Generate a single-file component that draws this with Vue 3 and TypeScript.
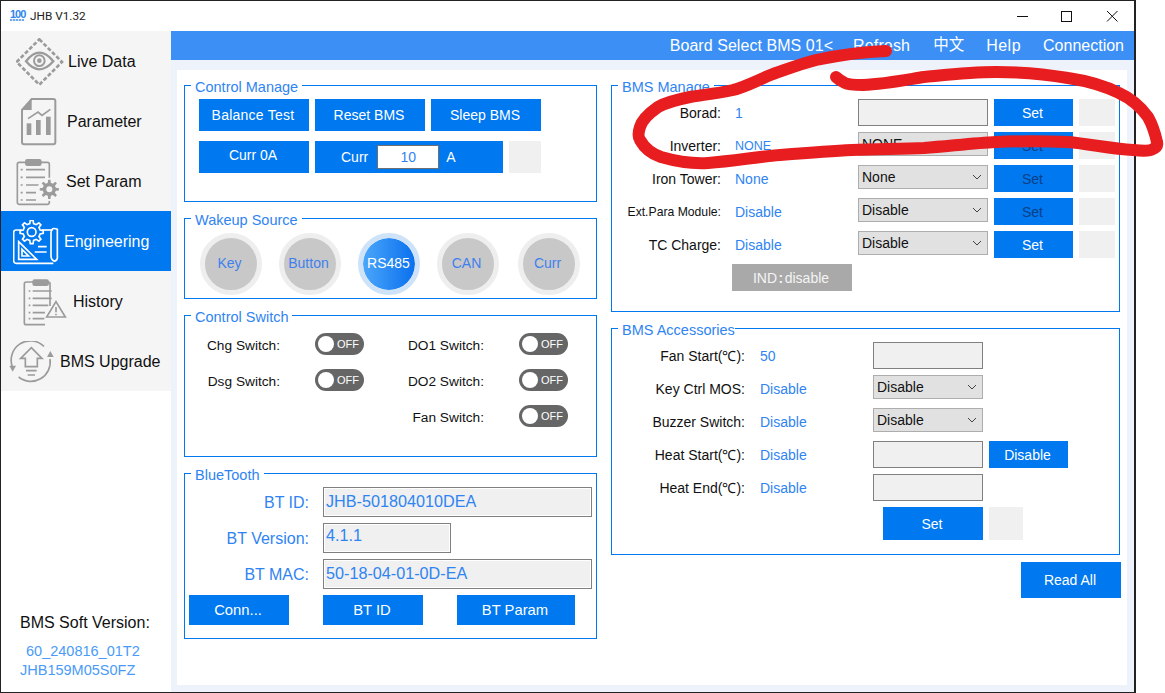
<script setup lang="ts">
function gear(cx: number, cy: number, r1: number, r2: number, n: number): string {
  const pts: string[] = []
  const step = (Math.PI * 2) / n
  for (let i = 0; i < n; i++) {
    const a = i * step - Math.PI / 2
    const w = step * 0.22
    const seq: [number, number][] = [
      [r1, a - w * 1.3],
      [r2, a - w * 0.7],
      [r2, a + w * 0.7],
      [r1, a + w * 1.3],
    ]
    for (const [r, t] of seq) {
      pts.push(`${(cx + r * Math.cos(t)).toFixed(1)},${(cy + r * Math.sin(t)).toFixed(1)}`)
    }
  }
  return 'M' + pts.join(' L') + ' Z'
}
const setGear = gear(148, 565, 20, 29, 8)
const engGear = gear(95, 78, 26, 35, 8)

const scribble =
  'M886 51 C860 52 835 56 816 60 C800 64 785 70 773 74 C758 80 745 87 733 90 C715 94 700 95 690 97 C675 100 665 103 658 107 C648 114 642 120 640 127 C638 133 638 137 640 140 C645 149 652 154 661 157 C675 161 692 164 708 163 C735 161 755 157 780 155 C805 153 830 151 852 150 C880 149 905 149 924 148 C950 146 975 143 996 142 C1020 141 1045 141 1068 142 C1090 144 1112 149 1133 150 C1143 151 1150 151 1151 150 C1156 148 1158 146 1157 142 C1155 133 1152 124 1148 117 C1140 106 1130 98 1119 93 C1105 86 1088 81 1068 78 C1045 74 1020 72 996 72 C970 72 945 75 924 77 C905 80 885 84 863 85 C855 85 849 85 845 83 C841 81 838 79 836 77'
</script>

<template>
  <div class="window">
    <header class="titlebar">
      <div class="logo"><b>100</b><i></i></div>
      <span class="title">JHB V1.32</span>
      <div class="caption">
        <svg width="46" height="28" viewBox="0 0 46 28"><path d="M20 14.5h11" stroke="#111" fill="none" /></svg>
        <svg width="46" height="28" viewBox="0 0 46 28"><rect x="18.5" y="9.5" width="10" height="10" stroke="#111" fill="none" /></svg>
        <svg width="46" height="28" viewBox="0 0 46 28"><path d="M18 9l10.500 10.500M28.500 9L18 19.500" stroke="#111" fill="none" /></svg>
      </div>
    </header>

    <div class="body">
      <aside class="sidebar">
        <nav class="menu">
          <div class="item i-live">
            <svg class="icon" width="48" height="48" viewBox="48 114 144 144">
              <path d="M118 118L186 186L118 254L50 186Z" fill="none" stroke="#9b9b9b" stroke-width="8" stroke-dasharray="12 6" />
              <path d="M78 184Q118 132 160 184Q118 232 78 184Z" fill="none" stroke="#9b9b9b" stroke-width="7" />
              <circle cx="118" cy="182" r="16" fill="none" stroke="#9b9b9b" stroke-width="6" />
              <circle cx="118" cy="182" r="7" fill="#9b9b9b" />
            </svg>
            <span>Live Data</span>
          </div>
          <div class="item i-param">
            <svg class="icon" width="36" height="48" viewBox="63 294 108 144">
              <path d="M95 297H160a6 6 0 0 1 6 6V427a6 6 0 0 1-6 6H72a6 6 0 0 1-6-6V330Z" fill="none" stroke="#9b9b9b" stroke-width="6" />
              <path d="M95 297L66 330H95Z" fill="#9b9b9b" />
              <rect x="80" y="370" width="14" height="35" fill="#9b9b9b" />
              <rect x="108" y="360" width="14" height="45" fill="#9b9b9b" />
              <rect x="138" y="350" width="14" height="55" fill="#9b9b9b" />
              <path d="M84 356L114 336L126 346L151 328" fill="none" stroke="#9b9b9b" stroke-width="5" />
            </svg>
            <span>Parameter</span>
          </div>
          <div class="item i-set">
            <svg class="icon" width="44" height="47" viewBox="48 474 132 141">
              <rect x="52" y="484" width="96" height="126" rx="6" fill="none" stroke="#9b9b9b" stroke-width="5" />
              <rect x="75" y="474" width="50" height="21" rx="7" fill="#9b9b9b" />
              <path d="M78 506H135M78 529H135M78 552H118M78 575H108M78 597H108" stroke="#9b9b9b" stroke-width="5" fill="none" />
              <path d="M62 506h6M62 529h6M62 552h6M62 575h6M62 597h6" stroke="#9b9b9b" stroke-width="5" fill="none" />
              <circle cx="148" cy="565" r="35" fill="#f5f5f5" />
              <path :d="setGear" fill="#9b9b9b" />
              <circle cx="148" cy="565" r="9" fill="#f5f5f5" />
            </svg>
            <span>Set Param</span>
          </div>
          <div class="item i-eng active">
            <svg class="icon" width="46" height="45" viewBox="39 42 138 135">
              <g fill="none" stroke="#fff" stroke-width="5">
                <path d="M65 72H48Q41 72 41 79V164Q41 172 49 172H160" />
                <path d="M125 72H158" />
                <path d="M172 70Q154 62 153 80V150Q153 162 164 166Q174 162 172 150Z" />
                <path :d="engGear" />
                <circle cx="95" cy="78" r="13" />
                <path d="M56 107L110 160H56Z" />
                <path d="M66 130L86 150H66Z" />
                <path d="M114 122H140M104 138H140" />
              </g>
            </svg>
            <span>Engineering</span>
          </div>
          <div class="item i-hist">
            <svg class="icon" width="44" height="47" viewBox="69 219 132 141">
              <path d="M150 300V232Q150 228 145 228H79Q73 228 73 234V350Q73 356 79 356H135" fill="none" stroke="#9b9b9b" stroke-width="5" />
              <rect x="97" y="220" width="50" height="20" rx="7" fill="#9b9b9b" />
              <path d="M98 255H155M98 277H155M98 298H145M98 320H135M98 338H133" stroke="#9b9b9b" stroke-width="5" fill="none" />
              <path d="M86 255h5M86 277h5M86 298h5M86 320h5M86 338h5" stroke="#9b9b9b" stroke-width="5" fill="none" />
              <path d="M168 287L196 333H140Z" fill="#f5f5f5" stroke="#9b9b9b" stroke-width="5" />
              <path d="M168 303V319M168 323V328" stroke="#9b9b9b" stroke-width="5" fill="none" />
            </svg>
            <span>History</span>
          </div>
          <div class="item i-upg">
            <svg class="icon" width="46" height="42" viewBox="27 408 138 126">
              <g fill="none" stroke="#9b9b9b" stroke-width="5">
                <path d="M38 488A58 58 0 0 1 132 424" />
                <path d="M150 462A58 58 0 0 1 56 516" />
                <path d="M94 428L126 460H112V485H76V460H62Z" />
                <path d="M78 497H110M83 510H105" />
              </g>
              <path d="M28 482H48L38 500Z" fill="#9b9b9b" />
              <path d="M141 456H161L151 438Z" fill="#9b9b9b" />
            </svg>
            <span>BMS Upgrade</span>
          </div>
        </nav>
        <div class="version">
          <p class="version-title">BMS Soft Version:</p>
          <p class="version-a">60_240816_01T2</p>
          <p class="version-b">JHB159M05S0FZ</p>
        </div>
      </aside>

      <main class="main">
        <div class="topbar">
          <span class="t-board">Board Select BMS 01&lt;</span>
          <span class="t-refresh">Refresh</span>
          <span class="t-cn">中文</span>
          <span class="t-help">Help</span>
          <span>Connection</span>
        </div>
        <div class="canvas">
          <div class="panel">
            <div class="col left">
              <section class="group g-control">
                <span class="legend">Control Manage</span>
                <div class="btn-row">
                  <button class="btn w110 wide">Balance Test</button>
                  <button class="btn w110">Reset BMS</button>
                  <button class="btn w110">Sleep BMS</button>
                </div>
                <div class="btn-row">
                  <button class="btn w110 raised">Curr 0A</button>
                  <div class="curr">
                    <span>Curr</span>
                    <input class="curr-input" value="10" readonly />
                    <span>A</span>
                  </div>
                  <div class="square s-curr"></div>
                </div>
              </section>

              <section class="group g-wake">
                <span class="legend">Wakeup Source</span>
                <div class="wake"><span>Key</span></div>
                <div class="wake"><span>Button</span></div>
                <div class="wake on"><span>RS485</span></div>
                <div class="wake"><span>CAN</span></div>
                <div class="wake last"><span>Curr</span></div>
              </section>

              <section class="group g-switch">
                <span class="legend">Control Switch</span>
                <span class="lab">Chg Switch:</span>
                <div class="toggle"><i></i><b>OFF</b></div>
                <span class="lab">DO1 Switch:</span>
                <div class="toggle"><i></i><b>OFF</b></div>
                <span class="lab">Dsg Switch:</span>
                <div class="toggle"><i></i><b>OFF</b></div>
                <span class="lab">DO2 Switch:</span>
                <div class="toggle"><i></i><b>OFF</b></div>
                <span class="lab fan">Fan Switch:</span>
                <div class="toggle"><i></i><b>OFF</b></div>
              </section>

              <section class="group g-bt">
                <span class="legend">BlueTooth</span>
                <span class="bt-lab">BT ID:</span>
                <input class="bt-input" value="JHB-501804010DEA" readonly />
                <span class="bt-lab">BT Version:</span>
                <input class="bt-input short" value="4.1.1" readonly />
                <span class="bt-lab">BT MAC:</span>
                <input class="bt-input" value="50-18-04-01-0D-EA" readonly />
                <div class="bt-btns">
                  <button class="btn w100">Conn...</button>
                  <button class="btn w100">BT ID</button>
                  <button class="btn w118">BT Param</button>
                </div>
              </section>
            </div>

            <div class="col right">
              <section class="group g-manage">
                <span class="legend">BMS Manage</span>
                <span class="lab">Borad:</span>
                <span class="val">1</span>
                <input class="field" readonly />
                <button class="btn">Set</button>
                <div class="square"></div>

                <span class="lab">Inverter:</span>
                <span class="val small">NONE</span>
                <div class="select"><span>NONE</span><svg width="10" height="6" viewBox="0 0 10 6"><path d="M1 1l4 4 4-4" fill="none" stroke="#444" /></svg></div>
                <button class="btn dark">Set</button>
                <div class="square"></div>

                <span class="lab">Iron Tower:</span>
                <span class="val">None</span>
                <div class="select"><span>None</span><svg width="10" height="6" viewBox="0 0 10 6"><path d="M1 1l4 4 4-4" fill="none" stroke="#444" /></svg></div>
                <button class="btn dark">Set</button>
                <div class="square"></div>

                <span class="lab tiny">Ext.Para Module:</span>
                <span class="val">Disable</span>
                <div class="select"><span>Disable</span><svg width="10" height="6" viewBox="0 0 10 6"><path d="M1 1l4 4 4-4" fill="none" stroke="#444" /></svg></div>
                <button class="btn dark">Set</button>
                <div class="square"></div>

                <span class="lab">TC Charge:</span>
                <span class="val">Disable</span>
                <div class="select"><span>Disable</span><svg width="10" height="6" viewBox="0 0 10 6"><path d="M1 1l4 4 4-4" fill="none" stroke="#444" /></svg></div>
                <button class="btn">Set</button>
                <div class="square"></div>

                <button class="ind">IND<span class="colon">:</span>disable</button>
              </section>

              <section class="group g-acc">
                <span class="legend tight">BMS Accessories</span>
                <span class="lab">Fan Start(℃):</span>
                <span class="val">50</span>
                <input class="field" readonly />
                <span></span>

                <span class="lab">Key Ctrl MOS:</span>
                <span class="val">Disable</span>
                <div class="select"><span>Disable</span><svg width="10" height="6" viewBox="0 0 10 6"><path d="M1 1l4 4 4-4" fill="none" stroke="#444" /></svg></div>
                <span></span>

                <span class="lab">Buzzer Switch:</span>
                <span class="val">Disable</span>
                <div class="select"><span>Disable</span><svg width="10" height="6" viewBox="0 0 10 6"><path d="M1 1l4 4 4-4" fill="none" stroke="#444" /></svg></div>
                <span></span>

                <span class="lab">Heat Start(℃):</span>
                <span class="val">Disable</span>
                <input class="field" readonly />
                <button class="btn">Disable</button>

                <span class="lab">Heat End(℃):</span>
                <span class="val">Disable</span>
                <input class="field" readonly />
                <span></span>

                <button class="btn acc-set">Set</button>
                <div class="square s-acc"></div>
              </section>

              <button class="btn read-all">Read All</button>
            </div>
          </div>
        </div>
      </main>
    </div>
  </div>

  <svg class="scribble" width="1165" height="693" viewBox="0 0 1165 693">
    <path :d="scribble" fill="none" stroke="#e71d20" stroke-width="12" stroke-linecap="round" stroke-linejoin="round" />
  </svg>
</template>

<style>
html,
body {
  margin: 0;
  background: #fff;
}
</style>

<style scoped>
.window {
  width: 1136px;
  height: 693px;
  box-sizing: border-box;
  border: 1px solid #222;
  border-right-width: 2px;
  background: #fff;
  display: flex;
  flex-direction: column;
  overflow: hidden;
  font-family: "Liberation Sans", Arial, sans-serif;
  font-size: 13px;
  color: #111;
}
.titlebar {
  height: 30px;
  flex: none;
  display: flex;
  align-items: center;
  padding-left: 9px;
}
.logo {
  width: 15px;
  display: flex;
  flex-direction: column;
  align-items: flex-start;
  color: #2f86ee;
  line-height: 1;
  margin-bottom: 1px;
}
.logo b {
  font-size: 11px;
  line-height: 8px;
  letter-spacing: -1px;
  font-weight: 700;
}
.logo i {
  display: block;
  width: 14px;
  height: 2px;
  margin-top: 1px;
  background: repeating-linear-gradient(90deg, #6ea9ee 0 2px, #cfe2f8 2px 3px);
}
.title {
  margin-left: 5px;
  font-family: "Roboto", sans-serif;
  font-size: 11.800px;
  color: #222;
}
.caption {
  margin-left: auto;
  display: flex;
  margin-right: -1px;
}
.body {
  flex: 1;
  display: flex;
  min-height: 0;
}
.sidebar {
  width: 170px;
  flex: none;
  display: flex;
  flex-direction: column;
  background: #fff;
}
.menu {
  background: #f5f5f5;
}
.item {
  height: 60px;
  display: flex;
  align-items: center;
  font-size: 16px;
  color: #111;
  box-sizing: border-box;
  padding-top: 2px;
}
.item.active {
  background: #0078f0;
  color: #fff;
}
.icon {
  flex: none;
}
.i-live { padding-left: 15px; gap: 4px; }
.i-param { padding-left: 20px; gap: 10px; }
.i-set { padding-left: 15px; gap: 6px; }
.i-eng { padding-left: 12px; gap: 5px; }
.i-hist { padding-left: 22px; gap: 6px; }
.i-upg { padding-left: 8px; gap: 5px; }
.version {
  margin-top: auto;
  padding: 0 0 12px 19px;
}
.version p {
  margin: 0;
}
.version-title {
  font-size: 16px;
  line-height: 19px;
  color: #111;
}
.version-a,
.version-b {
  font-size: 14.500px;
  line-height: 19px;
  color: #4a9bf8;
}
.version-a {
  margin-top: 10px !important;
  padding-left: 6px;
}
.main {
  flex: 1;
  min-width: 0;
  display: flex;
  flex-direction: column;
  background: #eef2fa;
}
.topbar {
  height: 29px;
  flex: none;
  background: #3c8ff5;
  color: #fff;
  font-size: 16px;
  display: flex;
  align-items: center;
  justify-content: flex-end;
  gap: 22px;
  padding-right: 10px;
  font-family: "Liberation Sans", "Noto Sans CJK SC", sans-serif;
}
.t-board { margin-right: -2px; letter-spacing: 0.05px; }
.t-refresh { margin-right: 1px; letter-spacing: 0.15px; }
.t-cn { font-size: 15.500px; line-height: 18px; margin-top: -1px; }
.t-help { letter-spacing: 0.5px; }
.canvas {
  flex: 1;
  min-height: 0;
  padding: 10px 7px 7px 6px;
}
.panel {
  height: 100%;
  background: #fff;
  display: flex;
  gap: 14px;
  padding: 15px 0 0 7px;
  box-sizing: border-box;
}
.col {
  display: flex;
  flex-direction: column;
  gap: 16px;
}
.col.left { width: 413px; }
.col.right { width: 509px; }
.group {
  position: relative;
  border: 1px solid #0078f0;
  box-sizing: border-box;
}
.legend {
  position: absolute;
  left: 6px;
  top: -7px;
  padding: 0 4px;
  background: #fff;
  font-size: 14.500px;
  line-height: 17px;
  color: #2f84f2;
  white-space: nowrap;
}
.legend.tight {
  padding-right: 0;
}
.btn {
  border: 0;
  margin: 0;
  padding: 0 2px 0 0;
  background: #0078f0;
  color: #fff;
  font: inherit;
  font-size: 14px;
  height: 100%;
}
.btn.dark {
  color: #0d3f86;
}
.btn.wide {
  letter-spacing: 0.25px;
}
.g-control {
  height: 117px;
  padding: 13px 14px;
  display: flex;
  flex-direction: column;
  gap: 10px;
}
.btn-row {
  display: flex;
  gap: 6px;
  height: 32px;
}
.w110 { width: 110px; }
.w100 { width: 100px; }
.w118 { width: 118px; }
.raised {
  padding-bottom: 5px;
}
.curr {
  width: 188px;
  background: #0078f0;
  color: #fff;
  font-size: 14px;
  display: flex;
  align-items: center;
  padding-left: 26px;
  box-sizing: border-box;
}
.curr-input {
  width: 62px;
  height: 24px;
  box-sizing: border-box;
  margin: 0 7px 0 9px;
  border: 1px solid #707070;
  outline: 0;
  padding: 0;
  text-align: center;
  font: inherit;
  font-size: 14px;
  color: #2f84f2;
  background: #fff;
}
.square {
  background: #f0f0f0;
  height: 100%;
}
.s-curr { width: 32px; }
.g-wake {
  height: 81px;
  display: flex;
  gap: 17px;
  padding: 14px 0 0 15px;
}
.wake {
  width: 62px;
  height: 62px;
  flex: none;
  border-radius: 50%;
  background: #c8c8c8;
  border: 5.500px solid #eeeeee;
  box-sizing: border-box;
  display: flex;
  align-items: center;
  justify-content: center;
  color: #3f80ee;
  font-size: 14px;
  padding: 0 3px 2px 0;
}
.wake.last { margin-left: 2px; }
.wake.on {
  background: linear-gradient(90deg, #4ba6fa, #0a70ee);
  border-color: #cfe3f8;
  background-clip: padding-box;
  color: #fff;
  padding-right: 1px;
}
.g-switch {
  height: 142px;
  display: grid;
  grid-template-columns: 95px 49px 85px 49px;
  grid-auto-rows: 22px;
  column-gap: 35px;
  row-gap: 14px;
  padding-top: 17px;
  align-items: center;
}
.lab {
  text-align: right;
  font-size: 14px;
  white-space: nowrap;
  color: #111;
}
.g-switch .lab {
  font-size: 13.700px;
  padding-top: 2px;
}
.lab.fan {
  grid-column: 3;
}
.lab.tiny {
  font-size: 12.200px;
}
.toggle {
  width: 49px;
  height: 22px;
  border-radius: 11px;
  background: #666;
  display: flex;
  align-items: center;
  padding-left: 3px;
  box-sizing: border-box;
}
.toggle i {
  width: 16px;
  height: 16px;
  border-radius: 50%;
  background: #fff;
  flex: none;
}
.toggle b {
  margin-left: 3px;
  color: #fff;
  font-weight: 400;
  font-size: 11px;
}
.g-bt {
  height: 166px;
  display: grid;
  grid-template-columns: 124px 269px;
  grid-auto-rows: 30px;
  column-gap: 14px;
  row-gap: 6px;
  padding-top: 13px;
  align-items: center;
}
.bt-lab {
  text-align: right;
  font-size: 16px;
  color: #2f84f2;
  padding-top: 2px;
}
.bt-input {
  width: 269px;
  height: 30px;
  box-sizing: border-box;
  border: 1px solid #808080;
  box-shadow: inset 0 0 0 1px #fff;
  background: #f0f0f0;
  outline: 0;
  padding: 0 2px 2px 2px;
  font: inherit;
  font-size: 16.200px;
  color: #2f84f2;
}
.bt-input.short {
  width: 128px;
  padding-bottom: 5px;
}
.bt-btns {
  grid-column: 1 / 3;
  height: 30px;
  display: flex;
  gap: 34px;
  padding-left: 4px;
}
.bt-btns .btn {
  font-size: 14.800px;
}
.g-manage {
  height: 227px;
  display: grid;
  grid-template-columns: 109px 125px 130px 79px 36px;
  grid-auto-rows: 27px;
  column-gap: 6px;
  row-gap: 6px;
  padding-top: 13px;
  align-items: center;
}
.val {
  padding-left: 8px;
  font-size: 14px;
  color: #2f84f2;
  white-space: nowrap;
}
.val.small {
  font-size: 12.500px;
}
.field {
  width: 100%;
  height: 27px;
  box-sizing: border-box;
  border: 1px solid #808080;
  background: #f0f0f0;
  outline: 0;
  padding: 0;
  margin: 0;
}
.select {
  height: 24px;
  align-self: start;
  box-sizing: border-box;
  border: 1px solid #adadad;
  background: #e1e1e1;
  display: flex;
  align-items: center;
  justify-content: space-between;
  padding: 0 5px 0 3px;
  font-size: 14px;
  color: #111;
}
.select svg {
  flex: none;
}
.ind {
  grid-column: 2;
  justify-self: end;
  width: 120px;
  height: 27px;
  border: 0;
  padding: 0 2px 0 0;
  background: #a9a9a9;
  color: #f4f4f4;
  font: inherit;
  font-size: 14px;
}
.colon {
  margin: 0 1.500px;
  font-weight: 700;
}
.g-acc {
  height: 227px;
  display: grid;
  grid-template-columns: 133px 116px 110px 79px;
  grid-template-rows: repeat(5, 27px) 33px;
  column-gap: 6px;
  row-gap: 6px;
  padding-top: 13px;
  align-items: center;
}
.g-acc .val {
  padding-left: 9px;
}
.acc-set {
  grid-column: 3;
  justify-self: end;
  width: 100px;
}
.s-acc {
  width: 34px;
}
.read-all {
  width: 100px;
  height: 36px;
  flex: none;
  align-self: flex-end;
  margin: -9px -1px 0 0;
}
.scribble {
  position: absolute;
  left: 0;
  top: 0;
  pointer-events: none;
}
</style>
